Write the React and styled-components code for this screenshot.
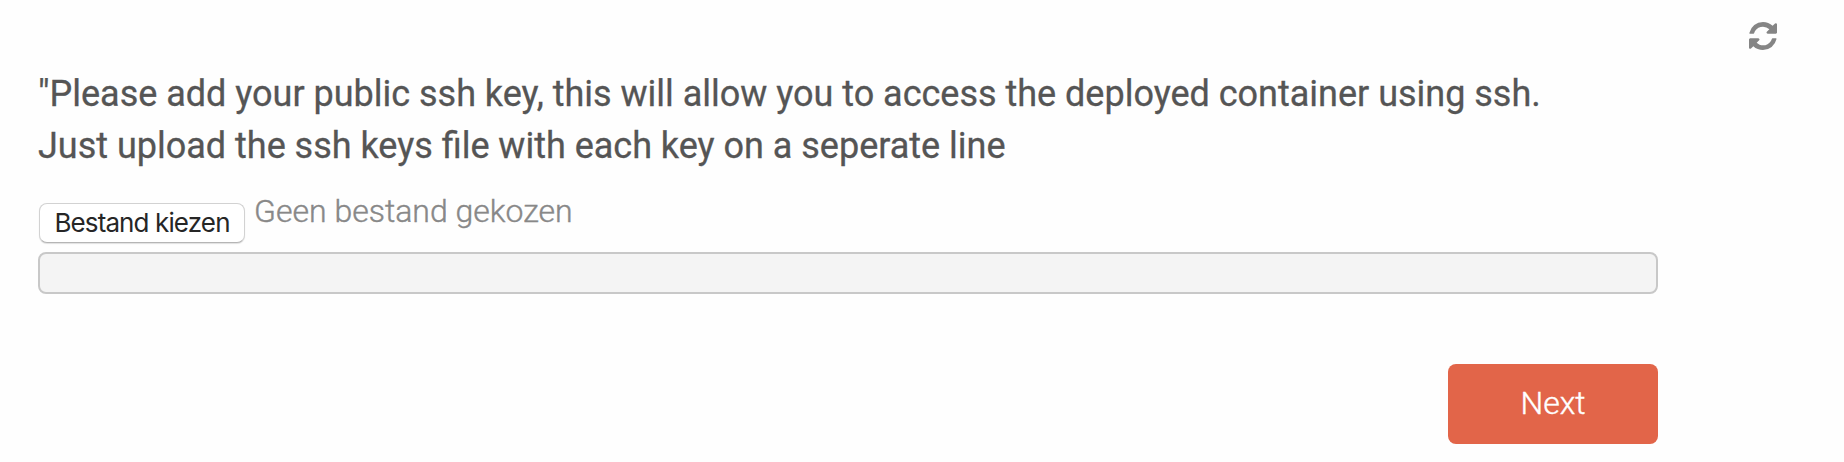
import React from "react";
import styled, { createGlobalStyle } from "styled-components";

const GlobalStyle = createGlobalStyle`
  * { box-sizing: border-box; }
  body { margin: 0; background: #fefefe; font-family: Roboto, sans-serif; }
`;

const Page = styled.main`
  display: flex;
  flex-direction: column;
  height: 462px;
  padding: 22px 67px 0 38px;
  overflow: hidden;
`;

const Toolbar = styled.header`
  display: flex;
  justify-content: flex-end;
  height: 46px;
`;

const RefreshIcon = styled.svg`
  width: 28px;
  height: 28px;
  fill: #858585;
`;

const Form = styled.section`
  display: flex;
  flex-direction: column;
  width: 1620px;
`;

const Instructions = styled.p`
  margin: 0;
  color: #555;
  font-size: 36px;
  line-height: 52px;
  word-spacing: -0.06px;
  -webkit-text-stroke: 0.3px #555;
  white-space: nowrap;
`;

const FileField = styled.div`
  display: flex;
  height: 80px;
  padding: 20px 0 0 1px;
`;

const ChooseButton = styled.button`
  width: 206px;
  height: 40px;
  margin-top: 11px;
  padding: 0;
  border: 1px solid #d2d2d2;
  border-bottom-color: #b5b5b5;
  border-radius: 8px;
  background: #fff;
  box-shadow: 0 1px 1px rgba(0, 0, 0, 0.12);
  color: #262626;
  font: 400 26px/38px Inter, sans-serif;
  letter-spacing: -0.88px;
  white-space: nowrap;
`;

const FileName = styled.span`
  margin-left: 9px;
  color: #888;
  font-size: 32px;
  font-weight: 300;
  line-height: 38px;
  -webkit-text-stroke: 0.4px #888;
`;

const Progress = styled.div`
  height: 42px;
  border: 2px solid #c8c8c8;
  border-radius: 8px;
  background: #f4f4f4;
`;

const Actions = styled.footer`
  display: flex;
  justify-content: flex-end;
  margin-top: 70px;
`;

const NextButton = styled.button`
  width: 210px;
  height: 80px;
  padding: 0 0 2px;
  border: 0;
  border-radius: 8px;
  background: #e26549;
  color: #fff;
  font: 300 32px/40px Roboto, sans-serif;
  -webkit-text-stroke: 0.4px #fff;
`;

export default function App() {
  return (
    <>
      <GlobalStyle />
      <Page>
        <Toolbar>
          <RefreshIcon viewBox="0 0 1536 1536" aria-label="Refresh">
            <path d="M1511 928q0 5-1 7-64 268-268 434.5t-478 166.5q-146 0-282.5-55t-243.5-157l-129 129q-19 19-45 19t-45-19-19-45v-448q0-26 19-45t45-19h448q26 0 45 19t19 45-19 45l-137 137q71 66 161 102t187 36q134 0 250-65t186-179q11-17 53-117 8-23 30-23h192q13 0 22.5 9.5t9.5 22.5zm25-800v448q0 26-19 45t-45 19h-448q-26 0-45-19t-19-45 19-45l138-138q-148-137-349-137-134 0-250 65t-186 179q-11 17-53 117-8 23-30 23h-199q-13 0-22.5-9.5t-9.5-22.5v-7q65-268 270-434.5t480-166.5q146 0 284 55.5t245 156.5l130-129q19-19 45-19t45 19 19 45z" />
          </RefreshIcon>
        </Toolbar>
        <Form>
          <Instructions>
            "Please add your public ssh key, this will allow you to access the deployed container using ssh.
            <br />
            Just upload the ssh keys file with each key on a seperate line
          </Instructions>
          <FileField>
            <ChooseButton type="button">Bestand kiezen</ChooseButton>
            <FileName>Geen bestand gekozen</FileName>
          </FileField>
          <Progress />
          <Actions>
            <NextButton type="button">Next</NextButton>
          </Actions>
        </Form>
      </Page>
    </>
  );
}
